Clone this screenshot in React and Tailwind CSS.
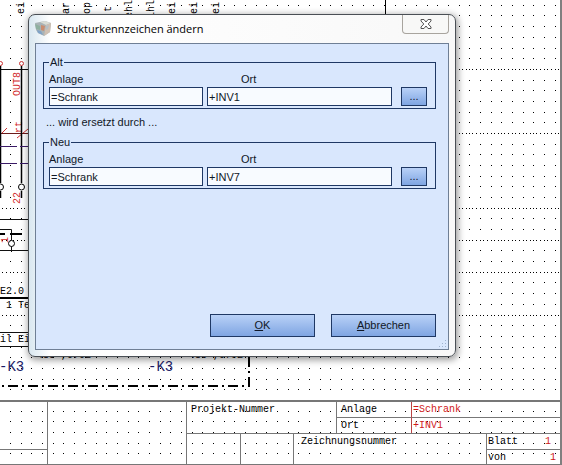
import React, { useState } from 'react';

const GRID_STEP = 10.68;
const DENSE_ROWS = [6, 12, 19, 22, 25, 29];

// One path for all grid dots, snapped to whole pixels
const buildGrid = (cols, rows) => {
    let d = '';
    for (let r = 0; r < rows; r++) {
        const y = Math.round(4.8 + r * GRID_STEP);
        for (let c = 0; c < cols; c++) {
            const x = Math.floor(c * GRID_STEP - 0.1);
            d += `M${x} ${y}h1v1h-1z`;
            if (DENSE_ROWS.includes(r)) {
                d += `M${x + 3} ${y}h1v1h-1zM${x + 7} ${y}h1v1h-1z`;
            }
        }
    }
    return d;
};

const GRID_PATH = buildGrid(120, 80);

const WIRE_LABELS = [
    { x: 24, text: 'ei' },
    { x: 69, text: 'ar' },
    { x: 90, text: 'op' },
    { x: 111, y: 12, text: 't' },
    { x: 132, y: 18, text: 'ehl' },
    { x: 154, y: 18, text: 'ihl' },
    { x: 175, text: 'ei' },
    { x: 197, text: 'ei' },
    { x: 219, text: 'ei' },
];

const Schematic = () => (
    <svg className="absolute inset-0 h-full w-full" fontFamily="'Liberation Mono', monospace" fontSize="10" aria-hidden="true">
        <path d={GRID_PATH} fill="#000" shapeRendering="crispEdges" />

        {/* Wire labels, read from the bottom up */}
        <g fill="#000">
            {WIRE_LABELS.map(({ x, y = 14, text }) => (
                <text key={x} transform={`translate(${x} ${y}) rotate(-90)`}>{text}</text>
            ))}
        </g>
        <path d="M385.5 0V14" stroke="#000" />

        {/* Terminals */}
        <g fill="none" stroke="#c33">
            <circle cx="0.5" cy="63.500" r="2" />
            <circle cx="21.5" cy="63.500" r="2" />
            <path d="M1 134L7 128M17 138L28 129" />
        </g>
        <g fill="#d22a2a">
            <text transform="translate(20 96) rotate(-90)">OUT8</text>
            <text transform="translate(22 133) rotate(-90)">rt</text>
            <text transform="translate(20 204) rotate(-90)">22</text>
            <text transform="translate(8 243) rotate(-90)">1</text>
        </g>
        <path d="M0 69.500H28M0 219.500H28M0 229.500H11.500V240M0 250.500H28M11.500 246V252" fill="none" stroke="#111" />
        <path d="M0 133.500H28" stroke="#6b1a1a" />
        <path d="M0.500 66V183M21.500 66V183M0.500 191V198M21.500 191V198" stroke="#000" strokeWidth="1.500" />
        <path d="M0 146.500H28M0 163.500H28" stroke="#3a1a66" strokeDasharray="17 3" />
        <path d="M0 234H5M10 234H22" stroke="#000" strokeWidth="2" />
        <g fill="#fff" stroke="#000">
            <circle cx="0.500" cy="187" r="3" />
            <circle cx="21.500" cy="187" r="3" />
            <circle cx="11.500" cy="243.500" r="3" />
        </g>

        {/* Module caption */}
        <path d="M0 298H28" stroke="#000" strokeWidth="2" />
        <path d="M0 332.500H28M0 346.500H28" stroke="#111" />
        <g fill="#000">
            <text x="0" y="294">E2.0</text>
            <text x="6" y="308">1 Teil</text>
            <text x="0" y="342">il Ein</text>
            <text x="37" y="358">485 ,070E</text>
            <text x="189" y="358">485 ,070E</text>
        </g>
        <g fontSize="14" fill="#1c1c66">
            <text x="-1" y="371">-K3</text>
            <text x="148" y="371">-K3</text>
        </g>
        <path d="M0 386H249V356" fill="none" stroke="#000" strokeWidth="2" strokeDasharray="10 4 2 4" strokeDashoffset="-8" />
    </svg>
);

const TitleBlock = () => (
    <footer className="relative flex border-t-2 border-b border-[#777] font-['Liberation_Mono',monospace] text-[10px] leading-[15px] text-black">
        <div className="w-12 shrink-0 border-r border-[#777]">
            <div className="h-12 border-b border-[#777]" />
        </div>
        <div className="w-[139px] shrink-0 border-r border-[#777]" />
        <div className="min-w-0 flex-1">
            <div className="flex h-8 border-b border-[#777]">
                <div className="w-[150px] shrink-0 border-r border-[#777] pl-1">Projekt-Nummer</div>
                <dl className="grid flex-1 grid-cols-[75px_1fr]">
                    <dt className="border-r border-b border-r-[#b44] border-b-[#777] pl-1">Anlage</dt>
                    <dd className="border-b border-[#777] pl-px text-[#d01818]">=Schrank</dd>
                    <dt className="border-r border-[#b44] pl-1">Ort</dt>
                    <dd className="pl-px text-[#d01818]">+INV1</dd>
                </dl>
            </div>
            <div className="flex h-[30px]">
                <div className="w-[54px] shrink-0 border-r border-[#777]" />
                <div className="w-[53px] shrink-0 border-r border-[#777]" />
                <div className="flex-1 pl-[7px]">Zeichnungsnummer</div>
                <dl className="grid w-[74px] shrink-0 grid-cols-[1fr_auto] border-l border-[#777]">
                    <dt className="border-b border-[#777] pl-px">Blatt</dt>
                    <dd className="border-b border-[#777] pr-[9px] text-[#d01818]">1</dd>
                    <dt className="pl-px">von</dt>
                    <dd className="pr-1 text-right text-[#d01818]">1</dd>
                </dl>
            </div>
        </div>
    </footer>
);

const AppIcon = () => (
    <svg className="h-4 w-4 shrink-0" viewBox="0 0 16 16" aria-hidden="true">
        <path d="M0 2L5 1L10 0L16 2L15 11L9 15L3 12L1 9Z" fill="#a9b3b6" />
        <path d="M5 1L10 0L16 2L11 4Z" fill="#d9dcd5" />
        <path d="M11 4L16 2L15 11L9 15Z" fill="#cfc0b2" />
        <path d="M0 3L5 5L5 9L1 8Z" fill="#8fb0a0" />
        <path d="M6 4L10 5L9 10L6 9Z" fill="#c98d70" />
        <path d="M2 9L6 10L8 14L3 12Z" fill="#7fa3c8" />
        <path d="M11 5L14 4L13 8L11 9Z" fill="#b5bfc6" />
    </svg>
);

const buttonStyle = 'border border-[#1f3864] bg-linear-to-b from-[#b9d1f7] to-[#7fa5e2] text-center';

const StructureGroup = ({ id, title, value, onChange }) => (
    <fieldset className="min-w-0 border border-[#1f3864] px-[5px] pb-0.5">
        <legend className="px-px leading-3">{title}</legend>
        <div className="flex items-end pt-1 pr-[3px]">
            <div className="w-[154px] shrink-0">
                <label htmlFor={`${id}-anlage`} className="block leading-[15px]">Anlage</label>
                <input
                    id={`${id}-anlage`}
                    className="block h-[19px] w-full border border-[#1f3864] bg-[#f8fbff] px-px"
                    value={value.anlage}
                    onChange={(e) => onChange({ ...value, anlage: e.target.value })}
                />
            </div>
            <div className="ml-1 min-w-0 flex-1">
                <label htmlFor={`${id}-ort`} className="block pl-[34px] leading-[15px]">Ort</label>
                <input
                    id={`${id}-ort`}
                    className="block h-[19px] w-full border border-[#1f3864] bg-[#f8fbff] px-px"
                    value={value.ort}
                    onChange={(e) => onChange({ ...value, ort: e.target.value })}
                />
            </div>
            <button type="button" className={`${buttonStyle} ml-[9px] h-[19px] w-[26px] shrink-0`}>...</button>
        </div>
    </fieldset>
);

const RenameDialog = () => {
    const [oldId, setOldId] = useState({ anlage: '=Schrank', ort: '+INV1' });
    const [newId, setNewId] = useState({ anlage: '=Schrank', ort: '+INV7' });

    return (
        <div
            role="dialog"
            aria-labelledby="dialog-title"
            className="relative rounded-[7px] border border-[#4a4f55] bg-linear-to-r from-[#d9e7f0] via-white via-5% to-[#f8f8f8] px-1.5 pb-1.5 shadow-[1px_2px_7px_1px_rgba(0,0,0,0.4)]"
        >
            <div className="flex h-7 items-center">
                <AppIcon />
                <h1 id="dialog-title" className="ml-1.5 flex-1 font-['Open_Sans',sans-serif] text-[11px] text-black">
                    Strukturkennzeichen ändern
                </h1>
                <button
                    type="button"
                    aria-label="Schließen"
                    className="flex h-[19px] w-[47px] items-center justify-center self-start rounded-b-[4px] border border-t-0 border-[#a8a49e] bg-[#f8f8f7]"
                >
                    <svg className="h-3 w-3" viewBox="0 0 12 12" aria-hidden="true">
                        <path d="M1 1.500H4L6 4L8 1.500H11V3L8.200 6L11 9V10.500H8L6 8L4 10.500H1V9L3.800 6L1 3Z" fill="#fff" stroke="#555" />
                    </svg>
                </button>
            </div>
            <form
                className="border border-[#6f7f95] bg-[#d9e7fd] pt-3 pr-3 pb-3 pl-[7px] font-['Liberation_Sans',sans-serif] text-[11px] text-[#111827]"
                onSubmit={(e) => e.preventDefault()}
            >
                <StructureGroup id="alt" title="Alt" value={oldId} onChange={setOldId} />
                <p className="mt-[7px] mb-2 pl-[3px] leading-3">... wird ersetzt durch ...</p>
                <StructureGroup id="neu" title="Neu" value={newId} onChange={setNewId} />
                <div className="mt-[125px] flex justify-end gap-4">
                    <button type="submit" className={`${buttonStyle} h-[23px] w-[105px]`}><u>O</u>K</button>
                    <button type="button" className={`${buttonStyle} h-[23px] w-[105px]`}><u>A</u>bbrechen</button>
                </div>
                {/* Resize grip */}
                <svg className="absolute right-2 bottom-2 h-2 w-2" viewBox="0 0 8 8" aria-hidden="true">
                    <path d="M6 0h1v1h-1zM6 3h1v1h-1zM6 6h1v1h-1zM3 3h1v1h-1zM3 6h1v1h-1zM0 6h1v1h-1z" fill="#9fb3cf" />
                </svg>
            </form>
        </div>
    );
};

const App = () => (
    <main className="relative min-h-screen overflow-hidden border-r-2 border-[#808080] bg-white">
        <Schematic />
        <section className="pt-3.5 pr-[104px] pb-[43px] pl-7">
            <RenameDialog />
        </section>
        <TitleBlock />
    </main>
);

export default App;
